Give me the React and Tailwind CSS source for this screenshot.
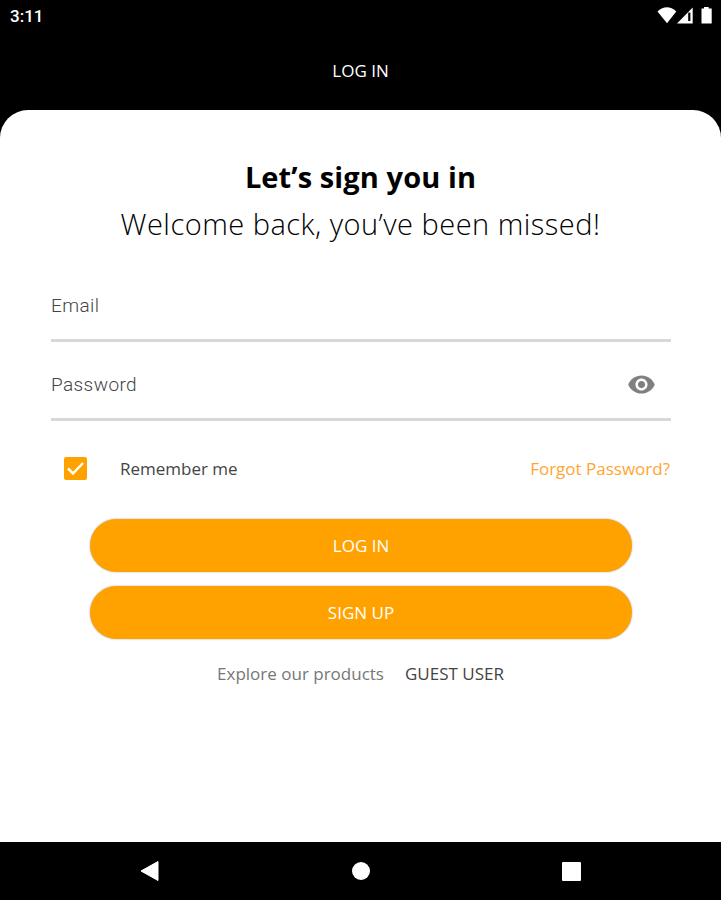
import { useState } from 'react'

const SANS = "font-['Open_Sans',sans-serif]"

function StatusBar() {
  return (
    <div className="flex h-8 shrink-0 items-center justify-between pl-2.5 pr-[7px] text-white">
      <span className="font-['Roboto',sans-serif] text-[17px] font-medium leading-8">3:11</span>
      <svg width="58" height="20" viewBox="0 0 58 20" fill="currentColor">
        <path d="M1.5 5.4Q10.9-3 20.3 5.4L11 17.2Z" />
        <path d="M36.7 1.5V17.5H21Z" />
        <path d="M32.2 6.6H34.4V15H32.2Z" fill="#000" />
        <path d="M45.5 2.5H48V.9H52.7V2.5H55.7V17.5H45.5Z" />
      </svg>
    </div>
  )
}

function Field({ label, type, value, onChange, children }) {
  return (
    <div className="flex h-[79px] items-center justify-between border-b-[3px] border-[#d8d8d8] pr-[15px] pt-[9px]">
      <input
        type={type}
        value={value}
        onChange={(e) => onChange(e.target.value)}
        placeholder={label}
        className="min-w-0 flex-1 bg-transparent pt-px font-['Roboto',sans-serif] text-[19px] font-light tracking-[0.4px] text-black outline-none placeholder:text-[#444] placeholder:opacity-100"
      />
      {children}
    </div>
  )
}

function PillButton({ children }) {
  return (
    <button className="h-[53px] w-full rounded-full bg-[#ffa200] text-[17px] font-normal text-white shadow-[0_0_2px_rgba(0,0,0,0.35)]">
      {children}
    </button>
  )
}

function NavBar() {
  return (
    <div className="flex h-[58px] shrink-0 items-center justify-between px-[140px] text-white">
      <svg width="20" height="22" viewBox="0 0 20 22" fill="currentColor" stroke="currentColor" strokeLinejoin="round">
        <path d="M1 11 18 1.5V20.5Z" />
      </svg>
      <span className="size-[18px] rounded-full bg-white" />
      <span className="size-[19px] rounded-[1px] bg-white" />
    </div>
  )
}

export default function App() {
  const [email, setEmail] = useState('')
  const [password, setPassword] = useState('')
  const [visible, setVisible] = useState(false)
  const [remember, setRemember] = useState(true)

  return (
    <div className={`flex h-[900px] w-[721px] flex-col overflow-hidden bg-black ${SANS}`}>
      <StatusBar />
      <header className="flex h-[78px] shrink-0 items-center justify-center text-[17px] text-white">LOG IN</header>

      <main className="flex flex-1 flex-col rounded-t-[28px] bg-white px-[51px] pt-[45px]">
        <h1 className="text-center text-[29px] font-bold leading-[44px] tracking-[0.1px] text-black">Let’s sign you in</h1>
        <p className="mt-[3px] text-center text-[29px] font-light leading-[44px] tracking-[0.48px] text-black">Welcome back, you’ve been missed!</p>

        <div className="-mr-px mt-[17px]">
          <Field label="Email" type="email" value={email} onChange={setEmail} />
          <Field label="Password" type={visible ? 'text' : 'password'} value={password} onChange={setPassword}>
            <button onClick={() => setVisible(!visible)} aria-label="Show password">
              <svg width="29" height="29" viewBox="0 0 24 24" fill="#808080">
                <path d="M12 4.5C7 4.5 2.73 7.61 1 12c1.73 4.39 6 7.5 11 7.5s9.27-3.11 11-7.5c-1.73-4.39-6-7.5-11-7.5zM12 17c-2.76 0-5-2.24-5-5s2.24-5 5-5 5 2.24 5 5-2.24 5-5 5zm0-8c-1.66 0-3 1.34-3 3s1.34 3 3 3 3-1.34 3-3-1.34-3-3-3z" />
              </svg>
            </button>
          </Field>
        </div>

        <div className="mt-[34px] flex h-7 items-center justify-between pl-[13px] text-[17px]">
          <button onClick={() => setRemember(!remember)} className="flex items-center gap-[33px] text-[#444]">
            <span className="mb-px flex size-[23px] items-center justify-center rounded-[2px] bg-[#ffa200]">
              {remember && (
                <svg width="19" height="17" viewBox="0 0 19 17" fill="none" stroke="#fff" strokeWidth="2.5">
                  <path d="M2 8.5 7 13.5 17 3" />
                </svg>
              )}
            </span>
            Remember me
          </button>
          <a href="#" className="text-[#ffa533]">Forgot Password?</a>
        </div>

        <div className="mt-9 flex flex-col gap-3.5 pl-[39px] pr-[38px]">
          <PillButton>LOG IN</PillButton>
          <PillButton>SIGN UP</PillButton>
        </div>

        <div className="mt-[21px] flex items-center justify-center gap-[21px] text-[17px] leading-7">
          <span className="text-[#777]">Explore our products</span>
          <a href="#" className="text-[#444]">GUEST USER</a>
        </div>
      </main>

      <NavBar />
    </div>
  )
}
